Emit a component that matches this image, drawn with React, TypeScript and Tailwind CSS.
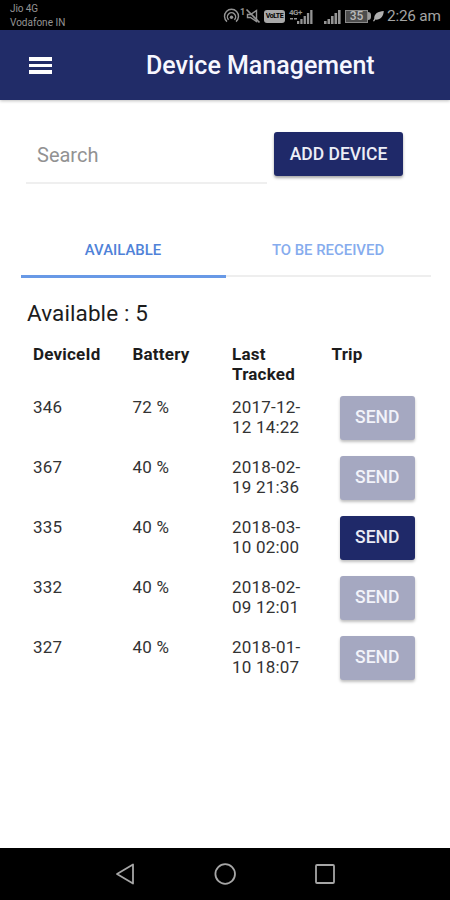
import { clsx } from "clsx"

type Device = {
  id: string
  battery: number
  tracked: [string, string]
  canSend: boolean
}

const devices: Device[] = [
  { id: "346", battery: 72, tracked: ["2017-12-", "12 14:22"], canSend: false },
  { id: "367", battery: 40, tracked: ["2018-02-", "19 21:36"], canSend: false },
  { id: "335", battery: 40, tracked: ["2018-03-", "10 02:00"], canSend: true },
  { id: "332", battery: 40, tracked: ["2018-02-", "09 12:01"], canSend: false },
  { id: "327", battery: 40, tracked: ["2018-01-", "10 18:07"], canSend: false },
]

function HotspotIcon() {
  return (
    <svg className="h-4 w-[17px]" viewBox="0 0 17 16" fill="none" stroke="currentColor" strokeWidth="1.4">
      <path d="M4 13.6a7 7 0 1 1 9 0" />
      <path d="M5.6 11.8a4.100 4.100 0 1 1 5.800 0" />
      <circle cx="8.5" cy="9.2" r="1.7" fill="currentColor" stroke="none" />
    </svg>
  )
}

function MuteIcon() {
  return (
    <svg className="h-4 w-4" viewBox="0 0 16 16" fill="none" stroke="currentColor" strokeWidth="1.4">
      <path d="M2.5 6.5h3l6-4v11l-6-4h-3z" />
      <path d="M1.5 1.5l13 13" strokeWidth="1.7" />
    </svg>
  )
}

function SignalIcon() {
  return (
    <svg className="h-[15px] w-[17px]" viewBox="0 0 17 15" fill="currentColor">
      <path d="M0 12h2.6v3H0zM3.5 10h2.6v5H3.5zM7 7h2.6v8H7zM10.5 4h2.6v11h-2.6zM14 1h2.6v14H14z" />
    </svg>
  )
}

function LeafIcon() {
  return (
    <svg className="h-3 w-[11px]" viewBox="0 0 11 12" fill="currentColor">
      <path d="M10.8 1C5 1.500 1 3.500 1.200 8.800L0 11l1 .6 1.500-2C7.500 10 10.500 6.500 10.800 1z" />
    </svg>
  )
}

function StatusBar() {
  return (
    <div className="flex h-[30px] items-start bg-black text-[#949494]">
      <div className="pt-[2px] pl-[10px] text-[10px] leading-[14px]">
        <div className="tracking-[-0.1px]">Jio 4G</div>
        <div>Vodafone IN</div>
      </div>
      <div className="ml-auto flex h-8 items-center pr-[9px]">
        <HotspotIcon />
        <span className="mb-2 w-[5px] text-[9px] leading-none font-bold">1</span>
        <MuteIcon />
        <span className="ml-[3px] flex h-[13px] w-[21px] items-center justify-center rounded-[3px] bg-[#a8a8a8] text-[7px] font-bold tracking-[-0.4px] text-black">VoLTE</span>
        <span className="relative ml-1 flex h-[15px] w-6 justify-end">
          <span className="absolute top-0 left-0 text-[8px] leading-none font-bold tracking-[-0.5px]">4G+</span>
          <svg className="h-[15px] w-6" viewBox="0 0 24 15" fill="currentColor">
            <path d="M1 9h3v1.500H1zM5 9h3v1.500H5zM8 12h2.300v3H8zM11.300 10h2.300v5h-2.300zM14.600 7h2.300v8h-2.300zM17.900 4h2.300v11h-2.300zM21.200 1h2.300v14h-2.300z" />
          </svg>
        </span>
        <span className="ml-[11px] flex">
          <SignalIcon />
        </span>
        <span className="ml-1 flex h-[13px] w-[23px] items-center justify-center border border-[#8a8a8a] bg-[#4d4d4d] text-[12px] leading-none font-medium text-[#bbb]">35</span>
        <span className="h-2 w-[3px] rounded-r-sm bg-[#9b9b9b]" />
        <span className="ml-[2px] flex text-[#b0b0b0]">
          <LeafIcon />
        </span>
        <span className="ml-[3px] w-[54px] pt-px text-[15.3px] leading-none tracking-[-0.2px] whitespace-nowrap text-[#a4a4a4]">2:26 am</span>
      </div>
    </div>
  )
}

function Header() {
  return (
    <header className="flex h-[70px] items-center bg-[#212c68] shadow-[0_1px_3px_rgba(0,0,0,0.25)]">
      <button className="ml-[29px] flex w-[23px] flex-col gap-[3px] pt-px" aria-label="Menu">
        <span className="h-[3.500px] w-full bg-white" />
        <span className="h-[3.500px] w-full bg-white" />
        <span className="h-[3.500px] w-full bg-white" />
      </button>
      <h1 className="ml-[94px] pt-[2px] text-[25px] leading-8 font-medium whitespace-nowrap text-[#f7f7ff]">Device Management</h1>
    </header>
  )
}

function SendButton({ enabled }: { enabled: boolean }) {
  return (
    <button
      disabled={!enabled}
      className={clsx(
        "-mt-px ml-[8.500px] block h-[44px] w-[74.500px] rounded-[3px] pb-[2px] text-[17.5px] font-medium shadow-[0_2px_3px_rgba(0,0,0,0.25)]",
        enabled ? "bg-[#1f2969] text-[#e9eaf4]" : "bg-[#a5a8c1] text-[#f2f3fa]"
      )}
    >
      SEND
    </button>
  )
}

export default function App() {
  return (
    <div className="flex h-[900px] w-[450px] flex-col overflow-hidden bg-white font-[Roboto,sans-serif] text-[#1c1c1c]">
      <StatusBar />
      <Header />

      <main className="flex-1">
        <div className="flex pt-8 pl-[26px]">
          <div className="flex h-[52px] w-[241px] items-center border-b-2 border-[#efefef] pb-1 pl-[11px] text-[20px] text-[#929292]">
            Search
          </div>
          <button className="ml-[7px] h-[44px] w-[129px] rounded-[3px] bg-[#1f2969] text-[17.5px] font-medium text-[#edeef7] shadow-[0_2px_3px_rgba(0,0,0,0.35)]">
            ADD DEVICE
          </button>
        </div>

        <div className="mt-10 ml-[20.500px] flex w-[410px] text-center text-[14.9px] font-medium">
          <div className="h-[54px] w-[205px] border-b-[3px] border-[#6899e6] pt-[15px] leading-[22px] text-[#4f82d8]">AVAILABLE</div>
          <div className="h-[54px] w-[205px] pt-[15px] leading-[22px] text-[#86acee]">
            TO BE RECEIVED
            <div className="mt-[14px] h-[2px] bg-[#eee]" />
          </div>
        </div>

        <h2 className="mt-[21px] ml-[27px] text-[22.5px] leading-[28px] tracking-[0.1px]">Available : 5</h2>

        <div className="mt-[17px] ml-[33px] grid grid-cols-[99.5px_99.5px_99.5px_1fr] text-[17px] leading-[20px] tracking-[0.2px]">
          <div className="font-bold">DeviceId</div>
          <div className="font-bold">Battery</div>
          <div className="font-bold">Last<br />Tracked</div>
          <div className="font-bold">Trip</div>
        </div>

        <div className="mt-[13px] ml-[33px]">
          {devices.map((device) => (
            <div key={device.id} className="grid h-[60px] grid-cols-[99.5px_99.5px_99.5px_1fr] text-[17px] leading-[20px] text-[#333]">
              <div className="tracking-[0.2px]">{device.id}</div>
              <div className="tracking-[0.2px]">{device.battery} %</div>
              <div className="tracking-[0.2px]">{device.tracked[0]}<br />{device.tracked[1]}</div>
              <div>
                <SendButton enabled={device.canSend} />
              </div>
            </div>
          ))}
        </div>
      </main>

      <nav className="flex h-[52px] items-center bg-black pl-[115px] text-[#a6a6a6]">
        <svg className="h-[22px] w-5" viewBox="0 0 20 22" fill="none" stroke="currentColor" strokeWidth="1.800" strokeLinejoin="round">
          <path d="M2 11L18 1.500v19z" />
        </svg>
        <svg className="ml-[79px] h-[22px] w-[22px]" viewBox="0 0 22 22" fill="none" stroke="currentColor" strokeWidth="1.800">
          <circle cx="11.2" cy="11" r="9.800" />
        </svg>
        <svg className="ml-[79px] h-5 w-5" viewBox="0 0 20 20" fill="none" stroke="currentColor" strokeWidth="1.800">
          <rect x="1" y="1" width="18" height="18" rx="1" />
        </svg>
      </nav>
    </div>
  )
}
